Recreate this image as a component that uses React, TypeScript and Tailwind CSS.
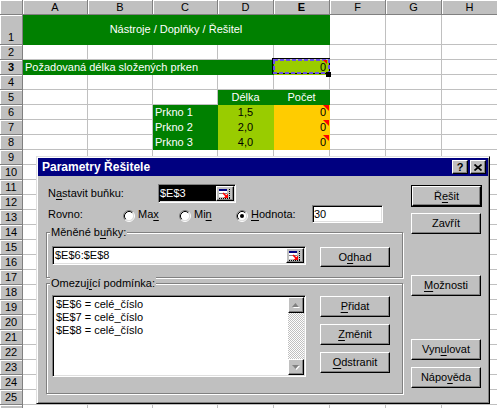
import React from "react";

const NORMAL = "border-r border-b border-[#c0c0c0] bg-white";
const HDR =
  "bg-[#c0c0c0] border-r border-b border-r-[#808080] border-b-[#808080] shadow-[inset_1px_1px_0_#fff] flex justify-center text-black text-[11px]";

function U({ children }: { children: React.ReactNode }) {
  return <span className="underline decoration-1 underline-offset-2">{children}</span>;
}

function Button({ children, className }: { children: React.ReactNode; className: string }) {
  return (
    <div
      className={
        "flex items-center justify-center bg-[#c0c0c0] border border-t-white border-l-white border-r-black border-b-black shadow-[inset_-1px_-1px_0_#808080] text-black " +
        className
      }
    >
      {children}
    </div>
  );
}

function Radio({ checked }: { checked?: boolean }) {
  return (
    <svg width="12" height="12" viewBox="0 0 12 12" className="shrink-0">
      <circle cx="6" cy="6" r="4.5" fill="#fff" />
      <path d="M2.11 9.89 A5.5 5.5 0 0 1 9.89 2.11" stroke="#808080" fill="none" />
      <path d="M9.89 2.11 A5.5 5.5 0 0 1 2.11 9.89" stroke="#ffffff" fill="none" />
      <path d="M2.82 9.18 A4.5 4.5 0 0 1 9.18 2.82" stroke="#000" fill="none" />
      <path d="M9.18 2.82 A4.5 4.5 0 0 1 2.82 9.18" stroke="#dfdfdf" fill="none" />
      {checked && <circle cx="6" cy="6" r="2" fill="#000" />}
    </svg>
  );
}

function RefButton() {
  return (
    <Button className="w-[18px] h-full">
      <svg width="14" height="12" viewBox="0 0 14 12">
        <rect x="1" y="1" width="8" height="2" fill="#000080" />
        <rect x="1" y="3" width="8" height="6" fill="#fff" />
        <line x1="1" y1="5.5" x2="9" y2="5.5" stroke="#808080" />
        <line x1="11.5" y1="1" x2="11.5" y2="11" stroke="#000" strokeDasharray="1 1" />
        <line x1="1" y1="10.5" x2="12" y2="10.5" stroke="#000" strokeDasharray="1 1" />
        <path d="M5 5 L8.5 8.5" stroke="#ff0000" strokeWidth="1.6" />
        <path d="M10 5.5 L10 10 L5.5 10 Z" fill="#ff0000" />
      </svg>
    </Button>
  );
}

const SUNKEN =
  "border border-t-[#808080] border-l-[#808080] border-r-white border-b-white shadow-[inset_1px_1px_0_#000,inset_-1px_-1px_0_#dfdfdf] bg-white p-[1px]";

function Triangle() {
  return (
    <div className="absolute top-0 right-0 w-0 h-0 border-t-[6px] border-l-[6px] border-t-[#ff0000] border-l-transparent" />
  );
}

function Row({ r }: { r: number }) {
  const hdr = (
    <div className={HDR + (r === 1 ? " items-end leading-[14px]" : " items-center leading-[14px]") + (r === 3 ? " font-bold" : "")}>
      {r < 26 ? r : ""}
    </div>
  );
  if (r === 1) {
    return (
      <>
        {hdr}
        <div className="col-span-5 bg-[#008000] border-r border-b border-[#008000] text-white flex items-center justify-center">
          Nástroje / Doplňky / Řešitel
        </div>
        <div className={NORMAL} />
        <div className={NORMAL} />
        <div className={NORMAL} />
      </>
    );
  }
  if (r === 3) {
    return (
      <>
        {hdr}
        <div className="col-span-4 bg-[#008000] border-r border-b border-[#008000] text-white leading-[14px] pl-[2px]">
          Požadovaná délka složených prken
        </div>
        <div className="relative bg-[#99cc00] border-r border-b border-[#99cc00] leading-[14px] text-right pr-[3px]">
          0
          <div className="absolute -left-[2px] -top-[2px] -right-[1px] bottom-0 border border-black z-10">
            <svg className="absolute inset-0" width="57" height="15" viewBox="0 0 57 15">
              <rect x="1" y="1" width="55" height="13" fill="none" stroke="#6a50e8" strokeWidth="2" strokeDasharray="4 2" />
            </svg>
            <div className="absolute top-[1px] right-[2px] w-0 h-0 border-t-[4px] border-l-[4px] border-t-[#ff0000] border-l-transparent" />
          </div>
          <div className="absolute -right-[2px] -bottom-[3px] w-[5px] h-[5px] bg-black z-20" />
        </div>
        <div className={NORMAL} />
        <div className={NORMAL} />
        <div className={NORMAL} />
      </>
    );
  }
  if (r === 5) {
    return (
      <>
        {hdr}
        <div className={NORMAL} />
        <div className={NORMAL} />
        <div className={NORMAL} />
        <div className="bg-[#008000] border-r border-b border-[#008000] text-white leading-[14px] text-center">Délka</div>
        <div className="bg-[#008000] border-r border-b border-[#008000] text-white leading-[14px] text-center">Počet</div>
        <div className={NORMAL} />
        <div className={NORMAL} />
        <div className={NORMAL} />
      </>
    );
  }
  if (r >= 6 && r <= 8) {
    const vals: Record<number, string> = { 6: "1,5", 7: "2,0", 8: "4,0" };
    return (
      <>
        {hdr}
        <div className={NORMAL} />
        <div className={NORMAL} />
        <div className="bg-[#008000] border-r border-b border-[#008000] text-white leading-[14px] pl-[2px]">Prkno {r - 5}</div>
        <div className="bg-[#99cc00] border-r border-b border-[#99cc00] leading-[14px] text-center">{vals[r]}</div>
        <div className="relative bg-[#ffcc00] border-r border-b border-[#ffcc00] leading-[14px] text-right pr-[3px]">
          0
          <Triangle />
        </div>
        <div className={NORMAL} />
        <div className={NORMAL} />
        <div className={NORMAL} />
      </>
    );
  }
  return (
    <>
      {hdr}
      <div className={NORMAL} />
      <div className={NORMAL} />
      <div className={NORMAL} />
      <div className={NORMAL} />
      <div className={NORMAL} />
      <div className={NORMAL} />
      <div className={NORMAL} />
      <div className={NORMAL} />
    </>
  );
}

function ScrollArrow({ down }: { down?: boolean }) {
  return (
    <Button className="w-[16px] h-[16px]">
      <svg width="8" height="5" viewBox="0 0 8 5">
        {down ? (
          <>
            <path d="M1 1 L8 1 L4.5 5 Z" fill="#ffffff" />
            <path d="M0 0 L7 0 L3.5 4 Z" fill="#808080" />
          </>
        ) : (
          <>
            <path d="M4.5 1 L8 5 L1 5 Z" fill="#ffffff" />
            <path d="M3.5 0 L7 4 L0 4 Z" fill="#808080" />
          </>
        )}
      </svg>
    </Button>
  );
}

function Dialog() {
  return (
    <div className="absolute left-[36px] top-[156px] w-[454px] h-[248px] bg-[#c0c0c0] border border-t-[#dfdfdf] border-l-[#dfdfdf] border-r-black border-b-black shadow-[inset_1px_1px_0_#fff,inset_-1px_-1px_0_#808080] p-[1px] flex flex-col text-black text-[11px] z-30">
      <div className="h-[18px] bg-[#000080] flex items-center pl-[4px] pr-[2px]">
        <span className="flex-1 text-white font-bold text-[12px] leading-none">Parametry Řešitele</span>
        <Button className="w-[16px] h-[14px] text-[11px] font-bold leading-none">?</Button>
        <Button className="w-[16px] h-[14px] ml-[2px]">
          <svg width="8" height="7" viewBox="0 0 8 7">
            <path d="M0.5 0.5 L7.5 6.5 M7.5 0.5 L0.5 6.5" stroke="#000" strokeWidth="1.7" />
          </svg>
        </Button>
      </div>
      <div className="flex">
        {/* left column */}
        <div className="ml-[8px] w-[357px] flex flex-col">
          <div className="mt-[8px] h-[19px] flex items-center">
            <div className="w-[112px] pl-[2px]">
              N<U>a</U>stavit buňku:
            </div>
            <div className={"w-[78px] h-[19px] flex " + SUNKEN}>
              <div className="flex-1 bg-black text-white leading-[15px]">$E$3</div>
              <RefButton />
            </div>
          </div>
          <div className="mt-[2px] h-[18px] flex items-center">
            <div className="w-[77px] pl-[2px]">Rovno:</div>
            <div className="w-[56px] flex items-center gap-[3px] mt-[3px]">
              <Radio />
              <span className="-mt-[2px]">
                Ma<U>x</U>
              </span>
            </div>
            <div className="w-[57px] flex items-center gap-[3px] mt-[3px]">
              <Radio />
              <span className="-mt-[2px]">
                Mi<U>n</U>
              </span>
            </div>
            <div className="w-[76px] flex items-center gap-[3px] mt-[3px]">
              <Radio checked />
              <span className="-mt-[2px]">
                <U>H</U>odnota:
              </span>
            </div>
            <div className={"w-[71px] h-[18px] leading-[14px] " + SUNKEN}>30</div>
          </div>

          <div className="relative mt-[9px] h-[46px] border border-[#808080] shadow-[inset_1px_1px_0_#fff,1px_1px_0_#fff] flex items-start pl-[5px] pt-[13px]">
            <div className="absolute left-[3px] -top-[7px] px-[1px] bg-[#c0c0c0] leading-[13px]">
              Měněné b<U>u</U>ňky:
            </div>
            <div className={"w-[254px] h-[19px] flex " + SUNKEN}>
              <div className="flex-1 leading-[15px] pl-[1px]">$E$6:$E$8</div>
              <RefButton />
            </div>
            <Button className="ml-[14px] mt-[1px] w-[70px] h-[20px]">
              O<U>d</U>had
            </Button>
          </div>

          <div className="relative mt-[5px] h-[111px] border border-[#808080] shadow-[inset_1px_1px_0_#fff,1px_1px_0_#fff] flex items-start pl-[5px] pt-[11px]">
            <div className="absolute left-[3px] -top-[7px] px-[1px] bg-[#c0c0c0] leading-[13px]">
              Omezuj<U>í</U>cí podmínka:
            </div>
            <div className={"w-[254px] h-[82px] flex " + SUNKEN}>
              <div className="flex-1 bg-white pl-[2px] pt-[1px] leading-[13px]">
                <div>$E$6 = celé_číslo</div>
                <div>$E$7 = celé_číslo</div>
                <div>$E$8 = celé_číslo</div>
              </div>
              <div className="w-[16px] flex flex-col">
                <ScrollArrow />
                <div className="flex-1 bg-[image:repeating-conic-gradient(#c0c0c0_0_25%,#ffffff_0_50%)] bg-[length:2px_2px]" />
                <ScrollArrow down />
              </div>
            </div>
            <div className="ml-[14px] flex flex-col">
              <Button className="mt-[1px] w-[70px] h-[21px]">
                <U>P</U>řidat
              </Button>
              <Button className="mt-[7px] w-[70px] h-[21px]">
                <U>Z</U>měnit
              </Button>
              <Button className="mt-[7px] w-[70px] h-[21px]">
                <U>O</U>dstranit
              </Button>
            </div>
          </div>
        </div>

        {/* right column */}
        <div className="ml-[8px] flex flex-col">
          <div className="mt-[9px] w-[71px] h-[22px] border border-black">
            <Button className="w-full h-full">
              Ř<U>e</U>šit
            </Button>
          </div>
          <Button className="mt-[6px] w-[70px] h-[21px]">Zavřít</Button>
          <Button className="mt-[41px] w-[70px] h-[21px]">
            <U>M</U>ožnosti
          </Button>
          <Button className="mt-[43px] w-[70px] h-[21px]">
            Vyn<U>u</U>lovat
          </Button>
          <Button className="mt-[7px] w-[70px] h-[21px]">
            Nápo<U>v</U>ěda
          </Button>
        </div>
      </div>
    </div>
  );
}

export default function App() {
  const cols = ["A", "B", "C", "D", "E", "F", "G", "H"];
  const rows = Array.from({ length: 26 }, (_, i) => i + 1);
  return (
    <div className="relative w-[497px] h-[408px] overflow-hidden bg-white font-['Liberation_Sans',Arial,sans-serif] text-[11px] text-black">
      <div className="grid grid-cols-[23px_65px_65px_65px_56px_56px_56px_56px_56px] grid-rows-[15px_30px_repeat(25,15px)]">
        <div className={HDR} />
        {cols.map((c) => (
          <div key={c} className={HDR + " items-center leading-[14px]" + (c === "E" ? " font-bold" : "")}>
            {c}
          </div>
        ))}
        {rows.map((r) => (
          <Row key={r} r={r} />
        ))}
      </div>
      <Dialog />
    </div>
  );
}
